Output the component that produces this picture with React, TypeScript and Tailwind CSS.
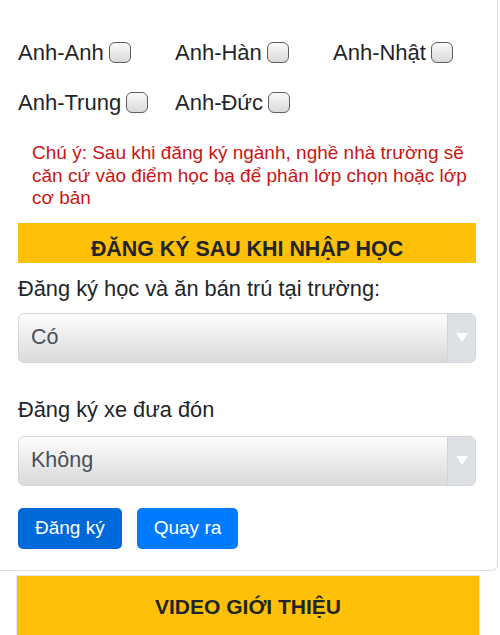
import { useState } from "react";

const languages = ["Anh-Anh", "Anh-Hàn", "Anh-Nhật", "Anh-Trung", "Anh-Đức"];

function Checkbox({ checked, onChange }: { checked: boolean; onChange: () => void }) {
  return (
    <button
      type="button"
      onClick={onChange}
      className="ml-[5px] w-[22px] h-[21px] rounded-[6px] border border-[#5f5f5f] bg-gradient-to-b from-[#fafafa] to-[#d9d9d9] flex items-center justify-center"
    >
      {checked && <span className="text-[14px] leading-none text-[#333]">✓</span>}
    </button>
  );
}

function Select({ value, options, onChange }: { value: string; options: string[]; onChange: (v: string) => void }) {
  return (
    <div className="relative h-[50px] rounded-[6px] border border-[#d4d7da] bg-gradient-to-b from-[#fdfdfd] to-[#dadada] overflow-hidden flex">
      <select
        value={value}
        onChange={(e) => onChange(e.target.value)}
        className="absolute inset-0 opacity-0 w-full"
      >
        {options.map((o) => (
          <option key={o}>{o}</option>
        ))}
      </select>
      <div className="flex-1 flex items-center pl-[12px] text-[21.5px] text-[#495057]">{value}</div>
      <div className="w-[28px] bg-[#dde1e6] border-l border-[#d0d4d9] flex items-center justify-center">
        <svg width="12" height="9" viewBox="0 0 12 9">
          <path d="M0 0 L12 0 L6 9 Z" fill="#ffffff" />
        </svg>
      </div>
    </div>
  );
}

export default function App() {
  const [checked, setChecked] = useState<string[]>([]);
  const [banTru, setBanTru] = useState("Có");
  const [xe, setXe] = useState("Không");

  const toggle = (l: string) =>
    setChecked((c) => (c.includes(l) ? c.filter((x) => x !== l) : [...c, l]));

  return (
    <main className="min-h-screen bg-white text-[#212529] font-['Liberation_Sans',Arial,sans-serif]">
      {/* CARD */}
      <div className="w-[498px] border-r border-b border-[#dcdfe2] rounded-br-[6px] pl-[18px] pr-[21px] pt-[37px] pb-[21px]">
        {/* NGOAI NGU */}
        <div className="grid grid-cols-[157px_158px_auto] gap-y-[20px]">
          {languages.map((l) => (
            <label key={l} className="h-[30px] flex items-center text-[22px]">
              <span>{l}</span>
              <Checkbox checked={checked.includes(l)} onChange={() => toggle(l)} />
            </label>
          ))}
        </div>

        <p className="mt-[25px] pl-[14px] text-[19px] leading-[22.5px] text-[#cc1414]">
          Chú ý: Sau khi đăng ký ngành, nghề nhà trường sẽ căn cứ vào điểm học bạ để phân lớp chọn hoặc lớp cơ bản
        </p>

        <div className="mt-[13px] h-[40px] bg-[#ffc107] pt-[14px] text-center text-[21.4px] leading-[24px] font-bold">
          ĐĂNG KÝ SAU KHI NHẬP HỌC
        </div>

        <p className="mt-[11px] text-[21.8px] leading-[30px]">Đăng ký học và ăn bán trú tại trường:</p>
        <div className="mt-[9px]">
          <Select value={banTru} options={["Có", "Không"]} onChange={setBanTru} />
        </div>

        <p className="mt-[32px] text-[21.8px] leading-[30px]">Đăng ký xe đưa đón</p>
        <div className="mt-[11px]">
          <Select value={xe} options={["Có", "Không"]} onChange={setXe} />
        </div>

        <div className="mt-[22px] flex gap-[15px]">
          <button className="h-[41px] px-[17px] rounded-[5px] bg-[#0069d9] text-white text-[19px]">Đăng ký</button>
          <button className="h-[41px] px-[17px] rounded-[5px] bg-[#007bff] text-white text-[19px]">Quay ra</button>
        </div>
      </div>

      {/* VIDEO */}
      <div className="mt-[4px] ml-[16px] w-[464px] h-[80px] border border-[#e2e2e2] bg-[#ffc107] pt-[19px] text-center text-[21px] leading-[24px] font-bold">
        VIDEO GIỚI THIỆU
      </div>
    </main>
  );
}
